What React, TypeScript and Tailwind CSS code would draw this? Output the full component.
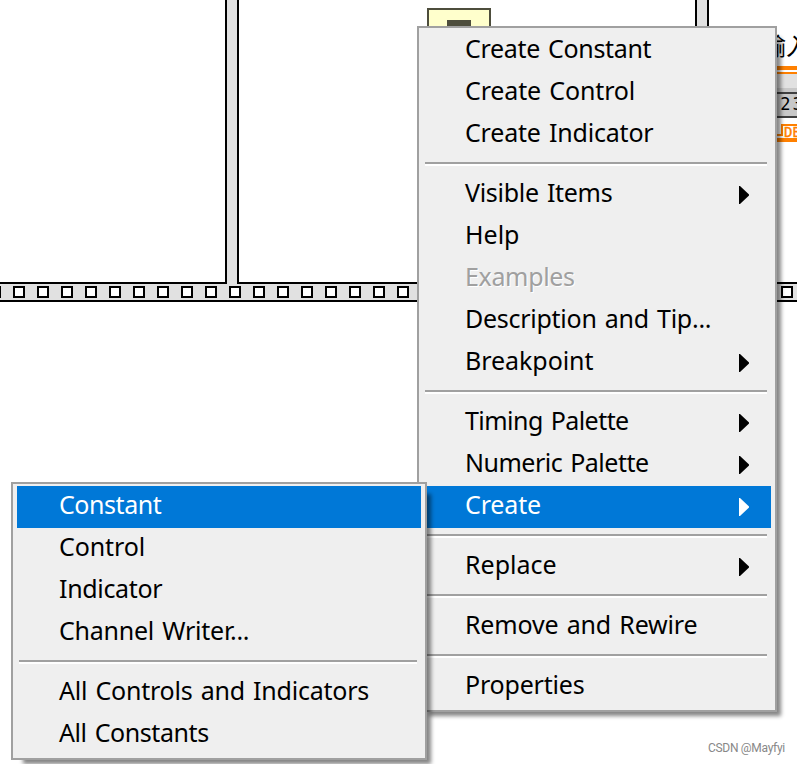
import clsx from 'clsx';

type Entry = {
    label: string;
    tracking?: string;
    submenu?: boolean;
    disabled?: boolean;
    active?: boolean;
};

const mainGroups: Entry[][] = [
    [
        { label: 'Create Constant', tracking: 'tracking-[-0.33px]' },
        { label: 'Create Control', tracking: 'tracking-[-0.15px]' },
        { label: 'Create Indicator', tracking: 'tracking-[-0.2px]' },
    ],
    [
        { label: 'Visible Items', tracking: 'tracking-[-0.3px]', submenu: true },
        { label: 'Help' },
        { label: 'Examples', tracking: 'tracking-[-0.35px]', disabled: true },
        { label: 'Description and Tip...', tracking: 'tracking-[-0.27px]' },
        { label: 'Breakpoint', tracking: 'tracking-[-0.05px]', submenu: true },
    ],
    [
        { label: 'Timing Palette', tracking: 'tracking-[-0.55px]', submenu: true },
        { label: 'Numeric Palette', tracking: 'tracking-[-0.5px]', submenu: true },
        { label: 'Create', tracking: 'tracking-[-0.15px]', submenu: true, active: true },
    ],
    [{ label: 'Replace', submenu: true }],
    [{ label: 'Remove and Rewire', tracking: 'tracking-[-0.18px]' }],
    [{ label: 'Properties', tracking: 'tracking-[-0.2px]' }],
];

const createGroups: Entry[][] = [
    [
        { label: 'Constant', tracking: 'tracking-[-0.45px]', active: true },
        { label: 'Control', tracking: 'tracking-[-0.1px]' },
        { label: 'Indicator', tracking: 'tracking-[-0.33px]' },
        { label: 'Channel Writer...', tracking: 'tracking-[-0.25px]' },
    ],
    [
        { label: 'All Controls and Indicators', tracking: 'tracking-[-0.23px]' },
        { label: 'All Constants', tracking: 'tracking-[-0.42px]' },
    ],
];

// perforations along the bottom edge of the frame
const perforations = Array.from({ length: 34 }, (_, index) => index);

function MenuItem({ entry }: { entry: Entry }) {
    return (
        <li
            className={clsx(
                'flex h-[42px] items-center justify-between pr-[22px] pl-[42px] text-[25px] leading-[42px] whitespace-nowrap [word-spacing:2px]',
                entry.active && 'bg-[#0078d7] text-white',
                entry.disabled && 'text-[#a0a0a0] [text-shadow:1px_1px_0_#fff]',
                !entry.active && !entry.disabled && 'text-black',
            )}
        >
            <span className={clsx('-mt-1.5', entry.tracking)}>{entry.label}</span>
            {entry.submenu && (
                <svg width="10" height="18" viewBox="0 0 10 18">
                    <path d="M0 0H1L10 8.5V9.5L1 18H0Z" fill="currentColor" />
                </svg>
            )}
        </li>
    );
}

function Menu({ groups, className }: { groups: Entry[][]; className: string }) {
    return (
        <div
            className={clsx(
                'absolute border-2 border-[#a0a0a0] bg-[#efefef] px-1 py-0.5 shadow-[8px_8px_4px_-4px_rgba(0,0,0,0.48)]',
                className,
            )}
        >
            {groups.map((group, index) => (
                <ul key={index}>
                    {index > 0 && (
                        <li className="mt-1.5 mr-1 mb-2 ml-0.5 h-1 border-t-2 border-[#a0a0a0] bg-white" />
                    )}
                    {group.map((entry) => (
                        <MenuItem key={entry.label} entry={entry} />
                    ))}
                </ul>
            ))}
        </div>
    );
}

function SequenceFrame() {
    return (
        <div className="w-[797px] overflow-hidden">
            <div className="flex h-[284px]">
                <div className="w-[225px] border-b-2 border-black" />
                <div className="w-[14px] border-x-2 border-black bg-[#e1e1e1]" />
                <div className="w-[456px] border-b-2 border-black" />
                <div className="w-[14px] border-x-2 border-black bg-[#e1e1e1]" />
                <div className="grow border-b-2 border-black" />
            </div>
            <div className="flex h-[18px] gap-3 border-b-2 border-black bg-[#e1e1e1] pt-0.5">
                {perforations.map((index) => (
                    <span
                        key={index}
                        className="size-3 shrink-0 border-2 border-black bg-white first:-ml-[11px]"
                    />
                ))}
            </div>
        </div>
    );
}

function NumericControl() {
    return (
        <div className="absolute top-[30px] left-[762px] w-[35px] overflow-hidden">
            <div className="h-9 font-['Noto_Sans_CJK_SC',sans-serif] text-2xl leading-[30px] whitespace-nowrap text-black">
                输入
            </div>
            <div className="h-1 bg-[#ff8000]" />
            <div className="mt-0.5 h-0.5 bg-[#ff8000]" />
            <div className="h-[18px] border-b-4 border-[#c8c8c8] bg-[#e1e1e1]" />
            <div className="h-[26px] border-y-2 border-[#404040] bg-[#c8c8c8] pl-2 font-['DejaVu_Sans_Mono',monospace] text-[17px] leading-[20px] whitespace-nowrap text-black">
                .<span className="tracking-[2px]">23</span>
            </div>
            <svg
                className="mt-1.5 block"
                width="35"
                height="20"
                viewBox="0 0 35 20"
                shapeRendering="crispEdges"
            >
                <path d="M35 1H20V11H15" fill="none" stroke="#ff8000" strokeWidth="2" />
                <path d="M15 14H35V18H15Z" fill="#ff8000" />
                <text
                    x="22"
                    y="13"
                    fontSize="14"
                    fontFamily="DejaVu Sans Mono, monospace"
                    fill="#ff8000"
                    stroke="#ff8000"
                    strokeWidth="0.4"
                >
                    DBL
                </text>
            </svg>
        </div>
    );
}

export default function App() {
    return (
        <div className="relative h-[764px] w-[799px] overflow-hidden bg-white font-['Noto_Sans','Noto_Sans_CJK_SC',sans-serif]">
            <SequenceFrame />
            <div className="absolute top-2 left-[427px] flex h-10 w-16 justify-center border-2 border-[#4d4d3c] bg-[#ffffcc] pt-2.5">
                <div className="h-4 w-6 bg-[#4d4d3c]" />
            </div>
            <NumericControl />
            <Menu groups={mainGroups} className="top-[26px] left-[417px] w-[360px]" />
            <Menu groups={createGroups} className="top-[482px] left-[11px] w-[416px]" />
            <p className="absolute top-[740px] left-[708px] font-[Roboto,sans-serif] text-[12px] leading-4 tracking-[-0.3px] whitespace-nowrap text-[#888]">
                CSDN @Mayfyi
            </p>
        </div>
    );
}
